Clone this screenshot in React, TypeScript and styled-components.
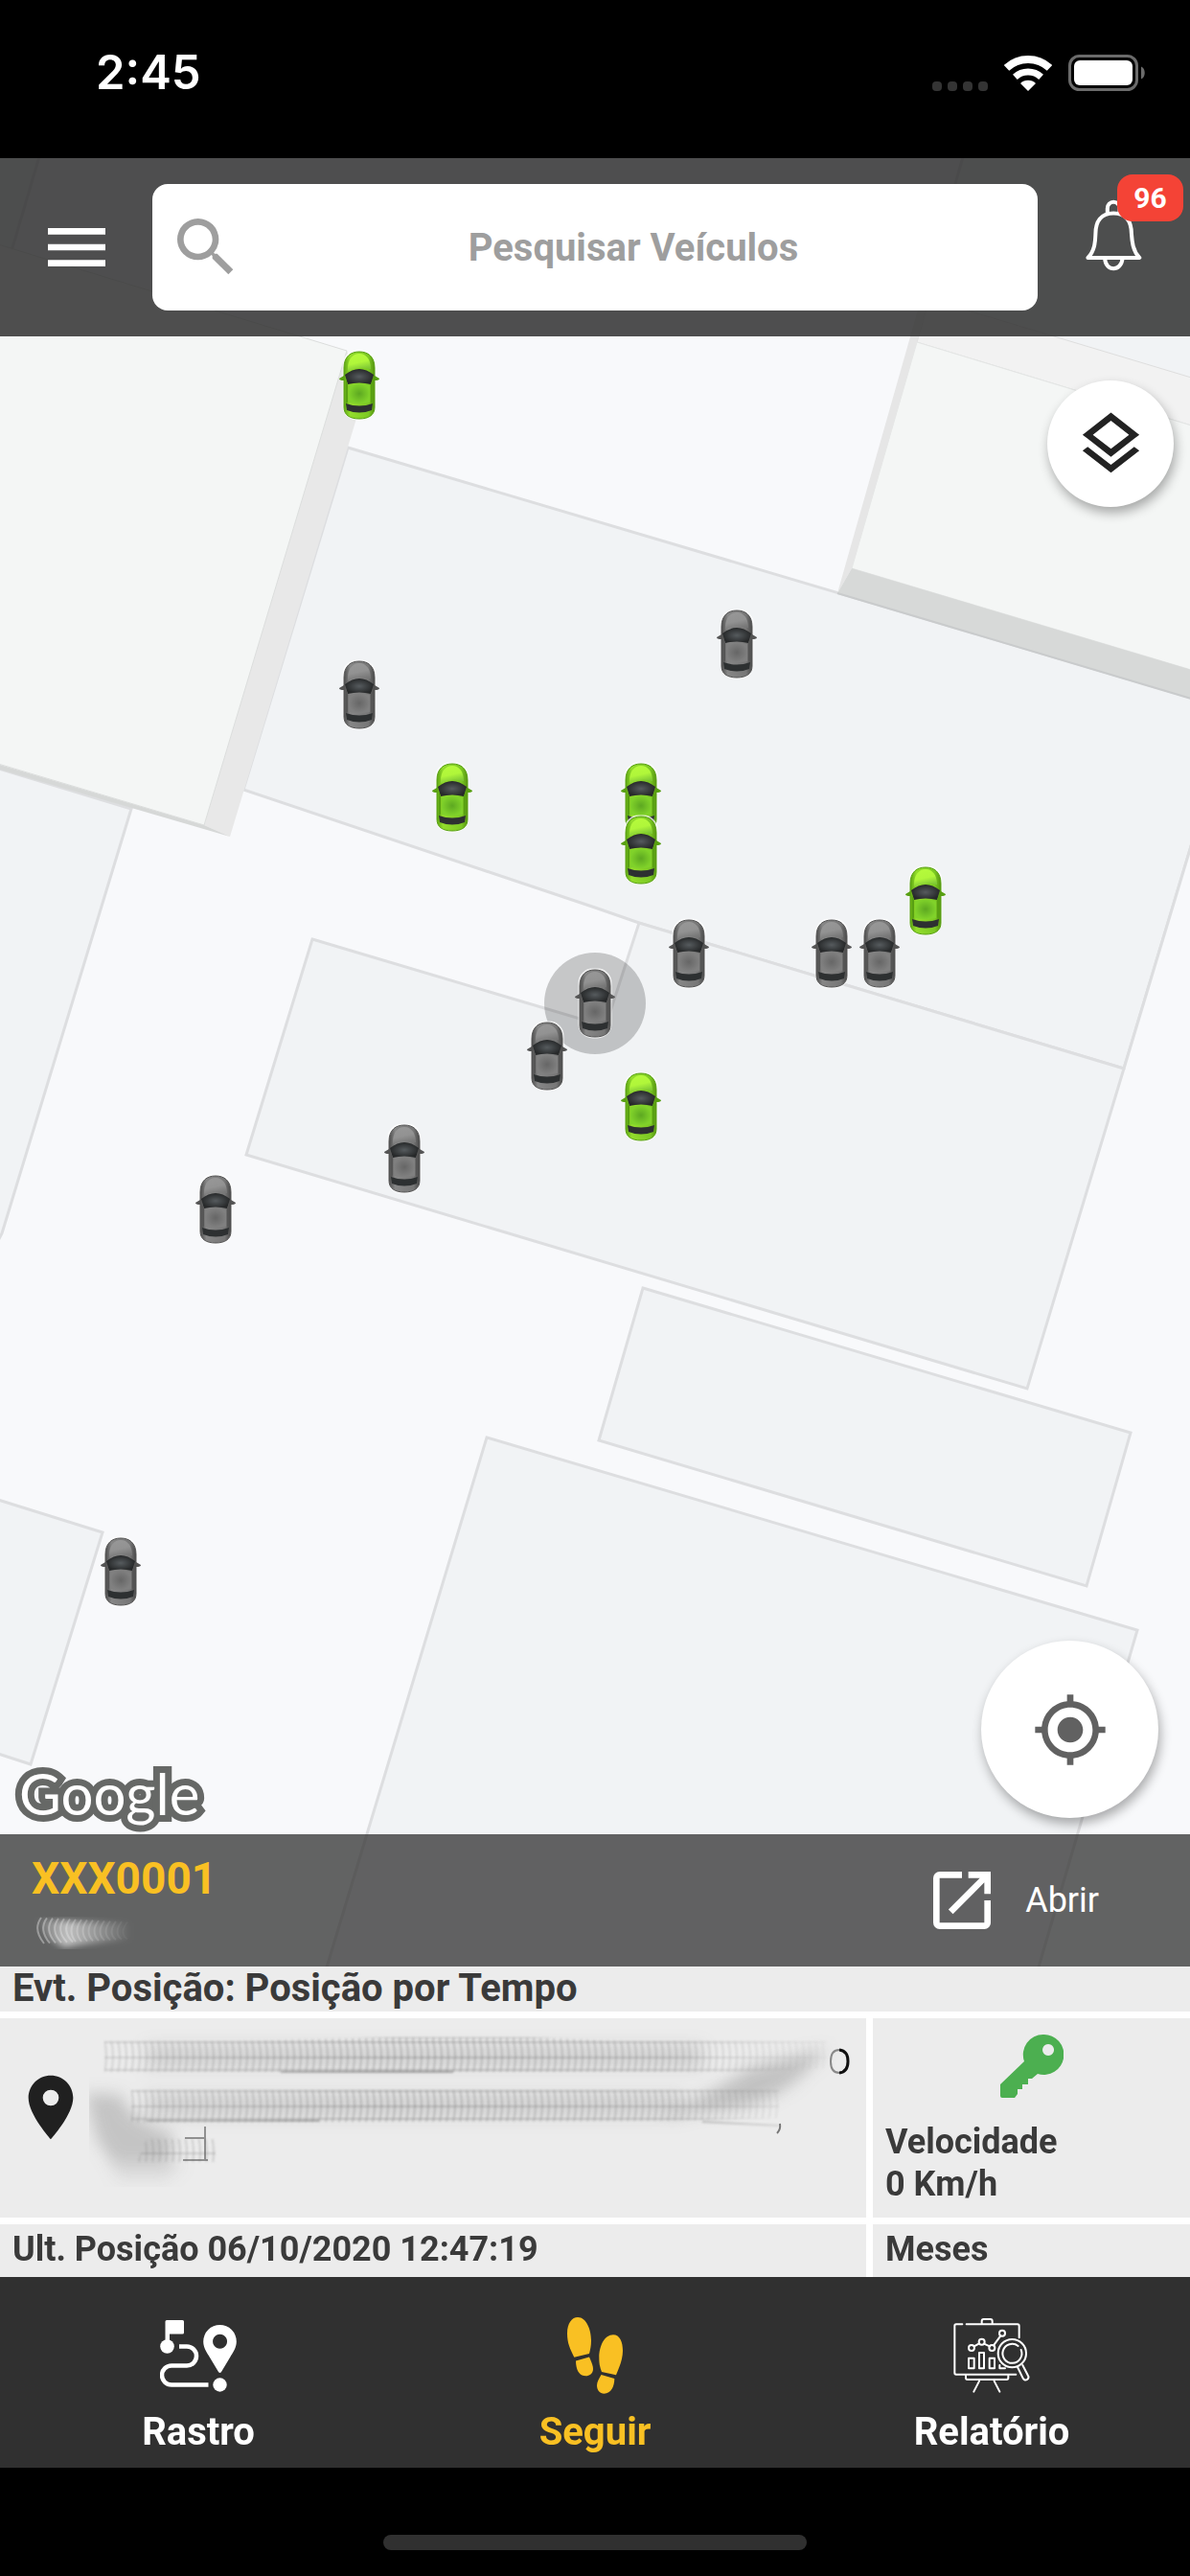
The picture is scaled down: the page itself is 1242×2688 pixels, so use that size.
import React from "react";
import styled, { createGlobalStyle, css } from "styled-components";
import {
  MdMenu,
  MdSearch,
  MdOutlineLayers,
  MdMyLocation,
  MdOpenInNew,
  MdPlace,
} from "react-icons/md";

const color = {
  dark: "#303030",
  amber: "#f9c023",
  panel: "#ececec",
  text: "#3a3a3a",
  grey: "#9e9e9e",
  badge: "#f44336",
  key: "#4caf50",
};

const GlobalStyle = createGlobalStyle`
  * { box-sizing: border-box; }
  body { margin: 0; background: #000; font-family: Roboto, "Noto Sans", sans-serif; }
  button { font: inherit; color: inherit; background: none; border: 0; padding: 0; cursor: pointer; }
  svg { display: block; }
`;

const Screen = styled.div`
  display: flex;
  flex-direction: column;
  min-height: 100vh;
  background: #000;
`;

/* ---------- status bar ---------- */

const StatusBar = styled.header`
  display: flex;
  align-items: center;
  justify-content: space-between;
  height: 165px;
  padding: 0 46px 13px 100px;
  color: #fff;
`;

const Clock = styled.time`
  font-family: Inter, sans-serif;
  font-size: 49px;
  font-weight: 600;
  line-height: 60px;
`;

const StatusIcons = styled.div`
  display: flex;
  align-items: flex-end;
  gap: 17px;
`;

const SignalDots = styled.div`
  display: flex;
  gap: 6px;
`;

const SignalDot = styled.span`
  width: 10px;
  height: 10px;
  border-radius: 4px;
  background: #343434;
`;

/* ---------- map ---------- */

const MapArea = styled.main`
  position: relative;
  flex: 1;
  display: flex;
  flex-direction: column;
  justify-content: space-between;
  min-height: 900px;
  overflow: hidden;
  background: #f8f9fb;
`;

const MapCanvas = styled.div`
  position: absolute;
  inset: 0;
  overflow: hidden;
`;

const MapDrawing = styled.svg`
  width: 100%;
  height: 100%;
`;

const Marker = styled.button<{ $x: number; $y: number; $selected?: boolean }>`
  position: absolute;
  left: calc(50% + ${(p) => p.$x - 621}px);
  top: ${(p) => p.$y}px;
  display: grid;
  place-items: center;
  width: 106px;
  height: 106px;
  margin: -53px 0 0 -53px;
  border-radius: 50%;
  pointer-events: none;
  ${(p) =>
    p.$selected &&
    css`
      background: rgba(0, 0, 0, 0.2);
    `}
`;

const RoundButton = styled.button<{ $size: number }>`
  display: grid;
  place-items: center;
  width: ${(p) => p.$size}px;
  height: ${(p) => p.$size}px;
  border-radius: 50%;
  background: #fff;
  box-shadow: 2px 6px 12px rgba(0, 0, 0, 0.32);
`;

const LayersSlot = styled.div`
  position: absolute;
  top: 232px;
  right: 17px;
  color: #222;
`;

const MapFooter = styled.div`
  position: relative;
`;

const MapCredits = styled.div`
  display: flex;
  align-items: flex-end;
  justify-content: space-between;
  padding: 0 33px 0 20px;
`;

const GoogleMark = styled.a`
  padding-bottom: 7px;
  font-family: Lato, sans-serif;
  font-size: 60px;
  line-height: 72px;
  color: #fff;
  text-decoration: none;
  -webkit-text-stroke: 14px #666866;
  paint-order: stroke fill;
`;

const LocateSlot = styled.div`
  padding-bottom: 17px;
  color: #616161;
`;

/* ---------- top bar ---------- */

const TopBar = styled.div`
  position: relative;
  display: grid;
  grid-template-columns: 159px 1fr 159px;
  align-items: center;
  height: 186px;
  background: rgba(48, 48, 48, 0.85);
  color: #fff;
`;

const BarButton = styled.button`
  position: relative;
  display: grid;
  place-items: center;
  height: 186px;
`;

const BellButton = styled(BarButton)`
  padding-bottom: 26px;
`;

const Badge = styled.span`
  position: absolute;
  top: 17px;
  right: 7px;
  width: 69px;
  border-radius: 16px;
  background: ${color.badge};
  font-size: 30px;
  font-weight: 700;
  line-height: 49px;
  text-align: center;
`;

const SearchBox = styled.label`
  display: flex;
  align-items: center;
  height: 132px;
  padding: 0 16px;
  border-radius: 16px;
  background: #fff;
  color: ${color.grey};
`;

const SearchInput = styled.input`
  flex: 1;
  min-width: 0;
  height: 100%;
  border: 0;
  outline: 0;
  background: none;
  font: 700 40px Roboto, "Noto Sans", sans-serif;
  text-align: center;
  color: ${color.text};
  &::placeholder {
    color: ${color.grey};
    opacity: 1;
  }
`;

/* ---------- vehicle bar ---------- */

const VehicleBar = styled.section`
  display: flex;
  align-items: center;
  justify-content: space-between;
  height: 138px;
  padding: 0 95px 0 33px;
  background: rgba(48, 48, 48, 0.75);
  color: #fff;
`;

const Plate = styled.h1`
  margin: 2px 0 12px;
  font-size: 46px;
  font-weight: 700;
  line-height: 52px;
  color: ${color.amber};
`;

const OpenButton = styled.button`
  display: flex;
  align-items: center;
  gap: 26px;
  font-size: 36px;
  line-height: 44px;
`;

/* ---------- info panel ---------- */

const InfoPanel = styled.section`
  display: flex;
  flex-direction: column;
  gap: 7px;
  background: #fff;
  color: ${color.text};
  font-size: 36px;
  font-weight: 700;
  line-height: 44px;
`;

const InfoRow = styled.div`
  display: grid;
  grid-template-columns: 1fr 331px;
  gap: 7px;
`;

const Cell = styled.div`
  padding: 4px 13px 7px;
  background: ${color.panel};
`;

const EventCell = styled(Cell)`
  padding: 1px 13px 2px;
  font-size: 40px;
`;

const AddressCell = styled(Cell)`
  display: flex;
  align-items: center;
  padding: 0 8px 22px 13px;
  color: #202020;
`;

const PlaceIcon = styled(MdPlace)`
  flex: none;
`;

const SpeedCell = styled(Cell)`
  padding: 17px 13px 13px;
`;

const KeyHolder = styled.div`
  display: flex;
  justify-content: center;
  margin-bottom: 24px;
`;

/* ---------- tabs ---------- */

const Tabs = styled.nav`
  display: grid;
  grid-template-columns: repeat(3, 1fr);
  background: ${color.dark};
`;

const Tab = styled.button<{ $active?: boolean }>`
  display: flex;
  flex-direction: column;
  align-items: center;
  gap: 16px;
  padding: 42px 0 13px;
  font-size: 40px;
  font-weight: 700;
  line-height: 48px;
  color: ${(p) => (p.$active ? color.amber : "#fff")};
`;

const HomeArea = styled.footer`
  display: flex;
  justify-content: center;
  height: 113px;
  padding-top: 70px;
`;

const HomeIndicator = styled.div`
  width: 442px;
  height: 16px;
  border-radius: 8px;
  background: ${color.dark};
`;

/* ---------- drawings ---------- */

const WifiIcon = () => (
  <svg width="50" height="37" viewBox="0 0 50 37" aria-hidden="true">
    <path d="M2.5 12.9A33 33 0 0 1 47.5 12.9" fill="none" stroke="#fff" strokeWidth="8" />
    <path d="M11.4 22.4A20 20 0 0 1 38.6 22.4" fill="none" stroke="#fff" strokeWidth="7" />
    <path d="M25 37L17 29A11.5 11.5 0 0 1 33 29Z" fill="#fff" />
  </svg>
);

const BatteryIcon = () => (
  <svg width="81" height="38" viewBox="0 0 81 38" aria-hidden="true">
    <rect x="1.5" y="1.5" width="70" height="35" rx="10" fill="none" stroke="#6b6b6b" strokeWidth="3" />
    <rect x="6" y="6" width="61" height="26" rx="6" fill="#fff" />
    <path d="M76 12.500C81 14 81 24 76 25.500Z" fill="#6b6b6b" />
  </svg>
);

const BellIcon = () => (
  <svg width="59" height="75" viewBox="160 128 176 224" fill="none" stroke="#fff" strokeWidth="12" strokeLinejoin="round" aria-hidden="true">
    <path d="M167 310C188 290 190 262 191 235C191 198 207 171 247 171C287 171 303 198 303 235C305 262 308 290 328 310Z" />
    <path d="M228 172V156a19 20 0 0 1 38 0V172" />
    <path d="M220 312C222 354 272 354 275 312" />
  </svg>
);

const KeyIcon = () => (
  <svg width="66" height="66" viewBox="0 0 66 66" aria-hidden="true">
    <path
      fill={color.key}
      fillRule="evenodd"
      d="M45 0a21 21 0 1 1-6 41l-6 5h-4v6h-6v5h-5v5l-3 4H2q-2 0-2-2V52L25 28A21 21 0 0 1 45 0ZM50 10a6 6 0 1 0 .1 0Z"
    />
  </svg>
);

const RouteIcon = () => (
  <svg width="80" height="80" viewBox="0 -3 80 80" fill="currentColor" aria-hidden="true">
    <path d="M5.500 1.500Q5.500 0 7 0H23.500Q25 0 25 1.500V13Q25 14.500 23.500 14.500H10V24H5.500Z" />
    <circle cx="7.500" cy="27.500" r="7.300" />
    <path d="M20 27.500H28a10 10 0 0 1 0 20H12a10 10 0 0 0 0 20H50.500" fill="none" stroke="currentColor" strokeWidth="4.500" />
    <path
      fillRule="evenodd"
      d="M62.500 5a17.300 17.300 0 0 1 17.300 17.300C79.800 29 76 34 73 39L64 54Q62.500 56 61 54L52 39C49 34 45.200 29 45.200 22.300A17.300 17.300 0 0 1 62.500 5ZM62.500 14.800a7.500 7.500 0 1 0 .1 0Z"
    />
    <circle cx="62.500" cy="67.500" r="7.200" />
  </svg>
);

const FootprintsIcon = () => (
  <svg width="58" height="80" viewBox="0 0 58 80" fill="currentColor" aria-hidden="true">
    <path d="M7.300 41.700C3 33 0 27 0 17C0 6 5 0 11 0C20 0 25 13 25 24C25 30 24 34 23 38Z" />
    <path d="M9 45.500L23 41.500C25 46 27 50 27 54C27 59 23 61.300 19.500 61.300C12 61.300 9 54 9 45.500Z" />
    <path d="M36 57C34 52 33.300 48 33.300 42C33.300 30 39 18.300 48 18.300C55 18.300 58 26 58 35C58 44 54 53 51 60.300Z" />
    <path d="M35.500 60L49.300 64C49.300 72 46 79.700 38.500 79.700C34 79.700 31 76 31 71C31 67 33.500 64 35.500 60Z" />
  </svg>
);

const ReportIcon = () => (
  <svg width="80" height="80" viewBox="345 84 240 240" fill="none" stroke="currentColor" strokeWidth="6" strokeLinecap="round" strokeLinejoin="round" aria-hidden="true">
    <path d="M373 106H354q-5 0-5 5V258q0 5 5 5H541M386 106H546q5 0 5 5V148" />
    <path d="M434 104V96q0-6 6-6H461q6 0 6 6V104" />
    <path d="M384 266V274q0 5 5 5H512q5 0 5-5V266M426 284L409 317M473 284L490 317" />
    <path d="M410 175L426 166M441 167L459 175M471 172L493 142" />
    <circle cx="402" cy="180" r="9" />
    <circle cx="434" cy="161" r="9" />
    <circle cx="466" cy="180" r="9" />
    <circle cx="498" cy="134" r="9" />
    <path d="M393 212H410V244H393ZM426 195H441V244H426ZM458 212H474V244H458ZM490 234V244H507" />
    <circle cx="529" cy="197" r="44" />
    <path d="M548 174A30 30 0 1 0 557 186" />
    <path d="M546 240L563 275q6 9 13 4q7-5 3-12L562 234" />
  </svg>
);

type CarTone = "green" | "grey";

const Car = ({ tone }: { tone: CarTone }) => {
  const edge = tone === "green" ? "#58a012" : "#555";
  return (
    <svg width="46" height="76" viewBox="-2 -3 46 76" aria-hidden="true">
      <rect x="3.500" y="-1.500" width="35" height="73" rx="15" fill="#fff" opacity=".75" />
      <path d="M5 25L0 28Q0 30 5 30ZM37 25L42 28Q42 30 37 30Z" fill={edge} />
      <path
        d="M5 17C5 5 12 0 21 0C30 0 37 5 37 17V58C37 66 31 70 21 70C11 70 5 66 5 58Z"
        fill={`url(#body-${tone})`}
        stroke={edge}
      />
      <path d="M9 18C9 8 14 2 21 2C28 2 33 8 33 18Q21 14 9 20Z" fill={`url(#hood-${tone})`} />
      <path d="M6 24Q21 12 36 24L33 34Q21 31 9 34Z" fill="url(#glass)" />
      <path d="M9 34L7 29V57L9 52ZM33 34L35 29V57L33 52Z" fill={edge} />
      <path d="M10 35Q21 32 32 35V53Q21 55 10 53Z" fill={`url(#roof-${tone})`} />
      <path d="M7 54Q21 59 35 54L34 61Q21 66 8 61Z" fill="#2d3031" />
    </svg>
  );
};

const MapDefs = () => (
  <defs>
    <linearGradient id="body-green">
      <stop offset="0" stopColor="#5da512" />
      <stop offset=".2" stopColor="#93dc2c" />
      <stop offset=".8" stopColor="#7cc824" />
      <stop offset="1" stopColor="#56940f" />
    </linearGradient>
    <linearGradient id="body-grey">
      <stop offset="0" stopColor="#4c4c4c" />
      <stop offset=".2" stopColor="#868686" />
      <stop offset=".8" stopColor="#777" />
      <stop offset="1" stopColor="#484848" />
    </linearGradient>
    <linearGradient id="hood-green" x2=".3" y2="1">
      <stop offset="0" stopColor="#b6fb3c" />
      <stop offset=".6" stopColor="#b0f63a" />
      <stop offset="1" stopColor="#80c936" />
    </linearGradient>
    <linearGradient id="hood-grey" x2=".3" y2="1">
      <stop offset="0" stopColor="#989898" />
      <stop offset=".6" stopColor="#929292" />
      <stop offset="1" stopColor="#777" />
    </linearGradient>
    <radialGradient id="roof-green">
      <stop offset="0" stopColor="#5da821" />
      <stop offset="1" stopColor="#80d22a" />
    </radialGradient>
    <radialGradient id="roof-grey">
      <stop offset="0" stopColor="#666" />
      <stop offset="1" stopColor="#808080" />
    </radialGradient>
    <radialGradient id="glass">
      <stop offset="0" stopColor="#565b5e" />
      <stop offset="1" stopColor="#262829" />
    </radialGradient>
  </defs>
);

/* Lots and buildings; the drawing's origin is the top left corner of the map. */
const MapShapes = () => (
  <MapDrawing viewBox="0 165 1242 1887" preserveAspectRatio="xMidYMin slice" aria-hidden="true">
    <MapDefs />
    <g fill="#f1f3f5" stroke="#dddee0" strokeWidth="3">
      <path d="M-5 160H42L-5 320Z" />
      <path d="M1006 160L952 352L1250 446V160Z" />
      <path d="M-5 801L137 844L2 1287L-5 1300Z" />
      <path d="M363 467L1250 730V860L1173 1115L667 963L621 947L254 824Z" />
      <path d="M326 980L632 1071L667 963L1173 1115L1072 1449L257 1205Z" />
      <path d="M671 1344L1180 1495L1134 1655L625 1503Z" />
      <path d="M508 1500L1187 1701L1083 2056H340Z" />
      <path d="M-5 1564L107 1599L32 1841L-5 1829Z" />
    </g>
    <path d="M1246 870L1173 1115L1300 1115V728Z" fill="#f8f9fb" />
    <path d="M1246 873L1173 1115" stroke="#dddee0" strokeWidth="3" />
    <path d="M362 366L378 410L371 440L240 873L213 861Z" fill="#e8e8e8" />
    <path d="M0 798L213 861L240 873L0 803Z" fill="#d6d8d7" />
    <path d="M-2 255L362 366L213 861L-2 797Z" fill="#f4f6f5" stroke="#dbdddc" />
    <path d="M970 312L1250 396V446L957 357Z" fill="#f2f2f2" stroke="#dedede" />
    <path d="M957 357L1250 446V701L889 593Z" fill="#f4f6f5" stroke="#e4e6e5" />
    <path d="M957 357L889 593L874 619L949 355L976 260H985Z" fill="#e6e6e6" />
    <path d="M889 593L1250 701V731L874 619Z" fill="#d7d9d8" />
    <path d="M874 619L1250 731" stroke="#c9cbcc" strokeWidth="2" />
  </MapDrawing>
);

const cars: { x: number; y: number; tone: CarTone; selected?: boolean }[] = [
  { x: 375, y: 402, tone: "green" },
  { x: 769, y: 672, tone: "grey" },
  { x: 375, y: 725, tone: "grey" },
  { x: 472, y: 832, tone: "green" },
  { x: 669, y: 832, tone: "green" },
  { x: 669, y: 887, tone: "green" },
  { x: 966, y: 940, tone: "green" },
  { x: 719, y: 995, tone: "grey" },
  { x: 868, y: 995, tone: "grey" },
  { x: 918, y: 995, tone: "grey" },
  { x: 621, y: 1047, tone: "grey", selected: true },
  { x: 571, y: 1102, tone: "grey" },
  { x: 669, y: 1155, tone: "green" },
  { x: 422, y: 1209, tone: "grey" },
  { x: 225, y: 1262, tone: "grey" },
  { x: 126, y: 1640, tone: "grey" },
];

/* Driver name, smudged out for privacy. */
const HiddenName = () => (
  <svg width="116" height="36" viewBox="0 0 116 36" fill="none" stroke="#fff" aria-hidden="true">
    <defs>
      <linearGradient id="name-fade">
        <stop offset="0" stopColor="#fff" stopOpacity=".1" />
        <stop offset=".3" stopColor="#fff" stopOpacity=".6" />
        <stop offset="1" stopColor="#fff" stopOpacity="0" />
      </linearGradient>
      <filter id="name-soft">
        <feGaussianBlur stdDeviation="3" />
      </filter>
    </defs>
    <path d="M8 5Q50 7 104 9V26Q60 30 34 34Q12 26 8 5Z" fill="url(#name-fade)" stroke="none" filter="url(#name-soft)" />
    {Array.from({ length: 16 }, (_, i) => (
      <path
        key={i}
        d={`M${10 + i * 6} ${3 + i * 0.3}q-9 12 ${i < 6 ? 3 : 0} ${27 - i * 0.6}`}
        opacity={0.36 - i * 0.021}
        strokeWidth="2"
      />
    ))}
  </svg>
);

/* Street address, smudged out for privacy. */
const HiddenAddress = () => (
  <svg width="100%" height="166" viewBox="0 0 803 166" preserveAspectRatio="xMinYMid meet" aria-hidden="true">
    <defs>
      <pattern id="ripple" width="7" height="34" patternUnits="userSpaceOnUse" patternTransform="translate(0 13)">
        <path d="M2 0Q6 17 2 34" fill="none" stroke="#777" strokeWidth="2" opacity=".34" />
        <path d="M0 2H7M0 18H7M0 31H7" stroke="#666" strokeWidth="2" opacity=".3" />
      </pattern>
      <linearGradient id="row-fade">
        <stop offset="0" stopColor="#fff" stopOpacity=".6" />
        <stop offset=".15" stopColor="#fff" stopOpacity=".75" />
        <stop offset=".4" stopColor="#fff" />
        <stop offset=".75" stopColor="#fff" stopOpacity=".8" />
        <stop offset="1" stopColor="#fff" stopOpacity="0" />
      </linearGradient>
      <mask id="row-mask">
        <rect width="803" height="166" fill="url(#row-fade)" />
      </mask>
      <filter id="soft" x="-20%" y="-40%" width="140%" height="180%">
        <feGaussianBlur stdDeviation="8" />
      </filter>
      <filter id="faint">
        <feGaussianBlur stdDeviation="1" />
      </filter>
    </defs>
    <g filter="url(#soft)" fill="#999">
      <path d="M60 18H640V42H60Z" opacity=".28" />
      <path d="M60 68H620V94H60Z" opacity=".28" />
      <path d="M600 92L650 66L690 42L770 22L748 46Q715 78 672 84Z" opacity=".5" />
      <path d="M-4 68L34 70Q40 98 88 110L84 140H24L8 116Z" opacity=".48" />
      <path d="M22 140H100L80 158H30Z" opacity=".22" />
    </g>
    <g mask="url(#row-mask)" filter="url(#faint)">
      <path d="M16 14H150L320 10H460L560 14H770V42L670 46H16Z" fill="url(#ripple)" />
      <path d="M44 14H720V43L600 46L44 48Z" fill="url(#ripple)" transform="translate(0 51)" />
      <path d="M60 16H132V40H50Z" fill="url(#ripple)" transform="translate(0 100)" />
      <path d="M60 97H240M200 46H380M640 98L720 102" stroke="#777" strokeWidth="2" opacity=".6" />
    </g>
    <path d="M121 118V138V118ZM121 103V138M100 115H121M98 138H124" stroke="#555" strokeWidth="2" opacity=".6" fill="none" />
    <path d="M721 100Q722 106 718 110" stroke="#777" strokeWidth="2" fill="none" />
    <path d="M783 23Q774 23 774 35Q774 47 783 47" stroke="#888" strokeWidth="2" fill="none" />
    <path d="M783 23Q792 24 792 35Q792 46 783 47" stroke="#111" strokeWidth="3" fill="none" />
  </svg>
);

export default function App() {
  return (
    <Screen>
      <GlobalStyle />
      <StatusBar>
        <Clock>2:45</Clock>
        <StatusIcons>
          <SignalDots>
            <SignalDot />
            <SignalDot />
            <SignalDot />
            <SignalDot />
          </SignalDots>
          <WifiIcon />
          <BatteryIcon />
        </StatusIcons>
      </StatusBar>

      <MapArea>
        <MapCanvas>
          <MapShapes />
          {cars.map((car, i) => (
            <Marker key={i} $x={car.x} $y={car.y - 165} $selected={car.selected} aria-label={`Veículo ${i + 1}`}>
              <Car tone={car.tone} />
            </Marker>
          ))}
        </MapCanvas>

        <TopBar>
          <BarButton aria-label="Menu">
            <MdMenu size={80} />
          </BarButton>
          <SearchBox>
            <MdSearch size={80} />
            <SearchInput type="text" placeholder="Pesquisar Veículos" aria-label="Pesquisar Veículos" />
          </SearchBox>
          <BellButton aria-label="Notificações">
            <BellIcon />
            <Badge>96</Badge>
          </BellButton>
        </TopBar>

        <LayersSlot>
          <RoundButton $size={132} aria-label="Camadas">
            <MdOutlineLayers size={79} />
          </RoundButton>
        </LayersSlot>

        <MapFooter>
          <MapCredits>
            <GoogleMark href="#google">Google</GoogleMark>
            <LocateSlot>
              <RoundButton $size={185} aria-label="Minha localização">
                <MdMyLocation size={80} />
              </RoundButton>
            </LocateSlot>
          </MapCredits>
          <VehicleBar>
            <div>
              <Plate>XXX0001</Plate>
              <HiddenName />
            </div>
            <OpenButton>
              <MdOpenInNew size={80} />
              Abrir
            </OpenButton>
          </VehicleBar>
        </MapFooter>
      </MapArea>

      <InfoPanel>
        <EventCell>Evt. Posição: Posição por Tempo</EventCell>
        <InfoRow>
          <AddressCell>
            <PlaceIcon size={80} />
            <HiddenAddress />
          </AddressCell>
          <SpeedCell>
            <KeyHolder>
              <KeyIcon />
            </KeyHolder>
            <div>Velocidade</div>
            <div>0 Km/h</div>
          </SpeedCell>
        </InfoRow>
        <InfoRow>
          <Cell>Ult. Posição 06/10/2020 12:47:19</Cell>
          <Cell>Meses</Cell>
        </InfoRow>
      </InfoPanel>

      <Tabs>
        <Tab>
          <RouteIcon />
          Rastro
        </Tab>
        <Tab $active>
          <FootprintsIcon />
          Seguir
        </Tab>
        <Tab>
          <ReportIcon />
          Relatório
        </Tab>
      </Tabs>
      <HomeArea>
        <HomeIndicator />
      </HomeArea>
    </Screen>
  );
}
